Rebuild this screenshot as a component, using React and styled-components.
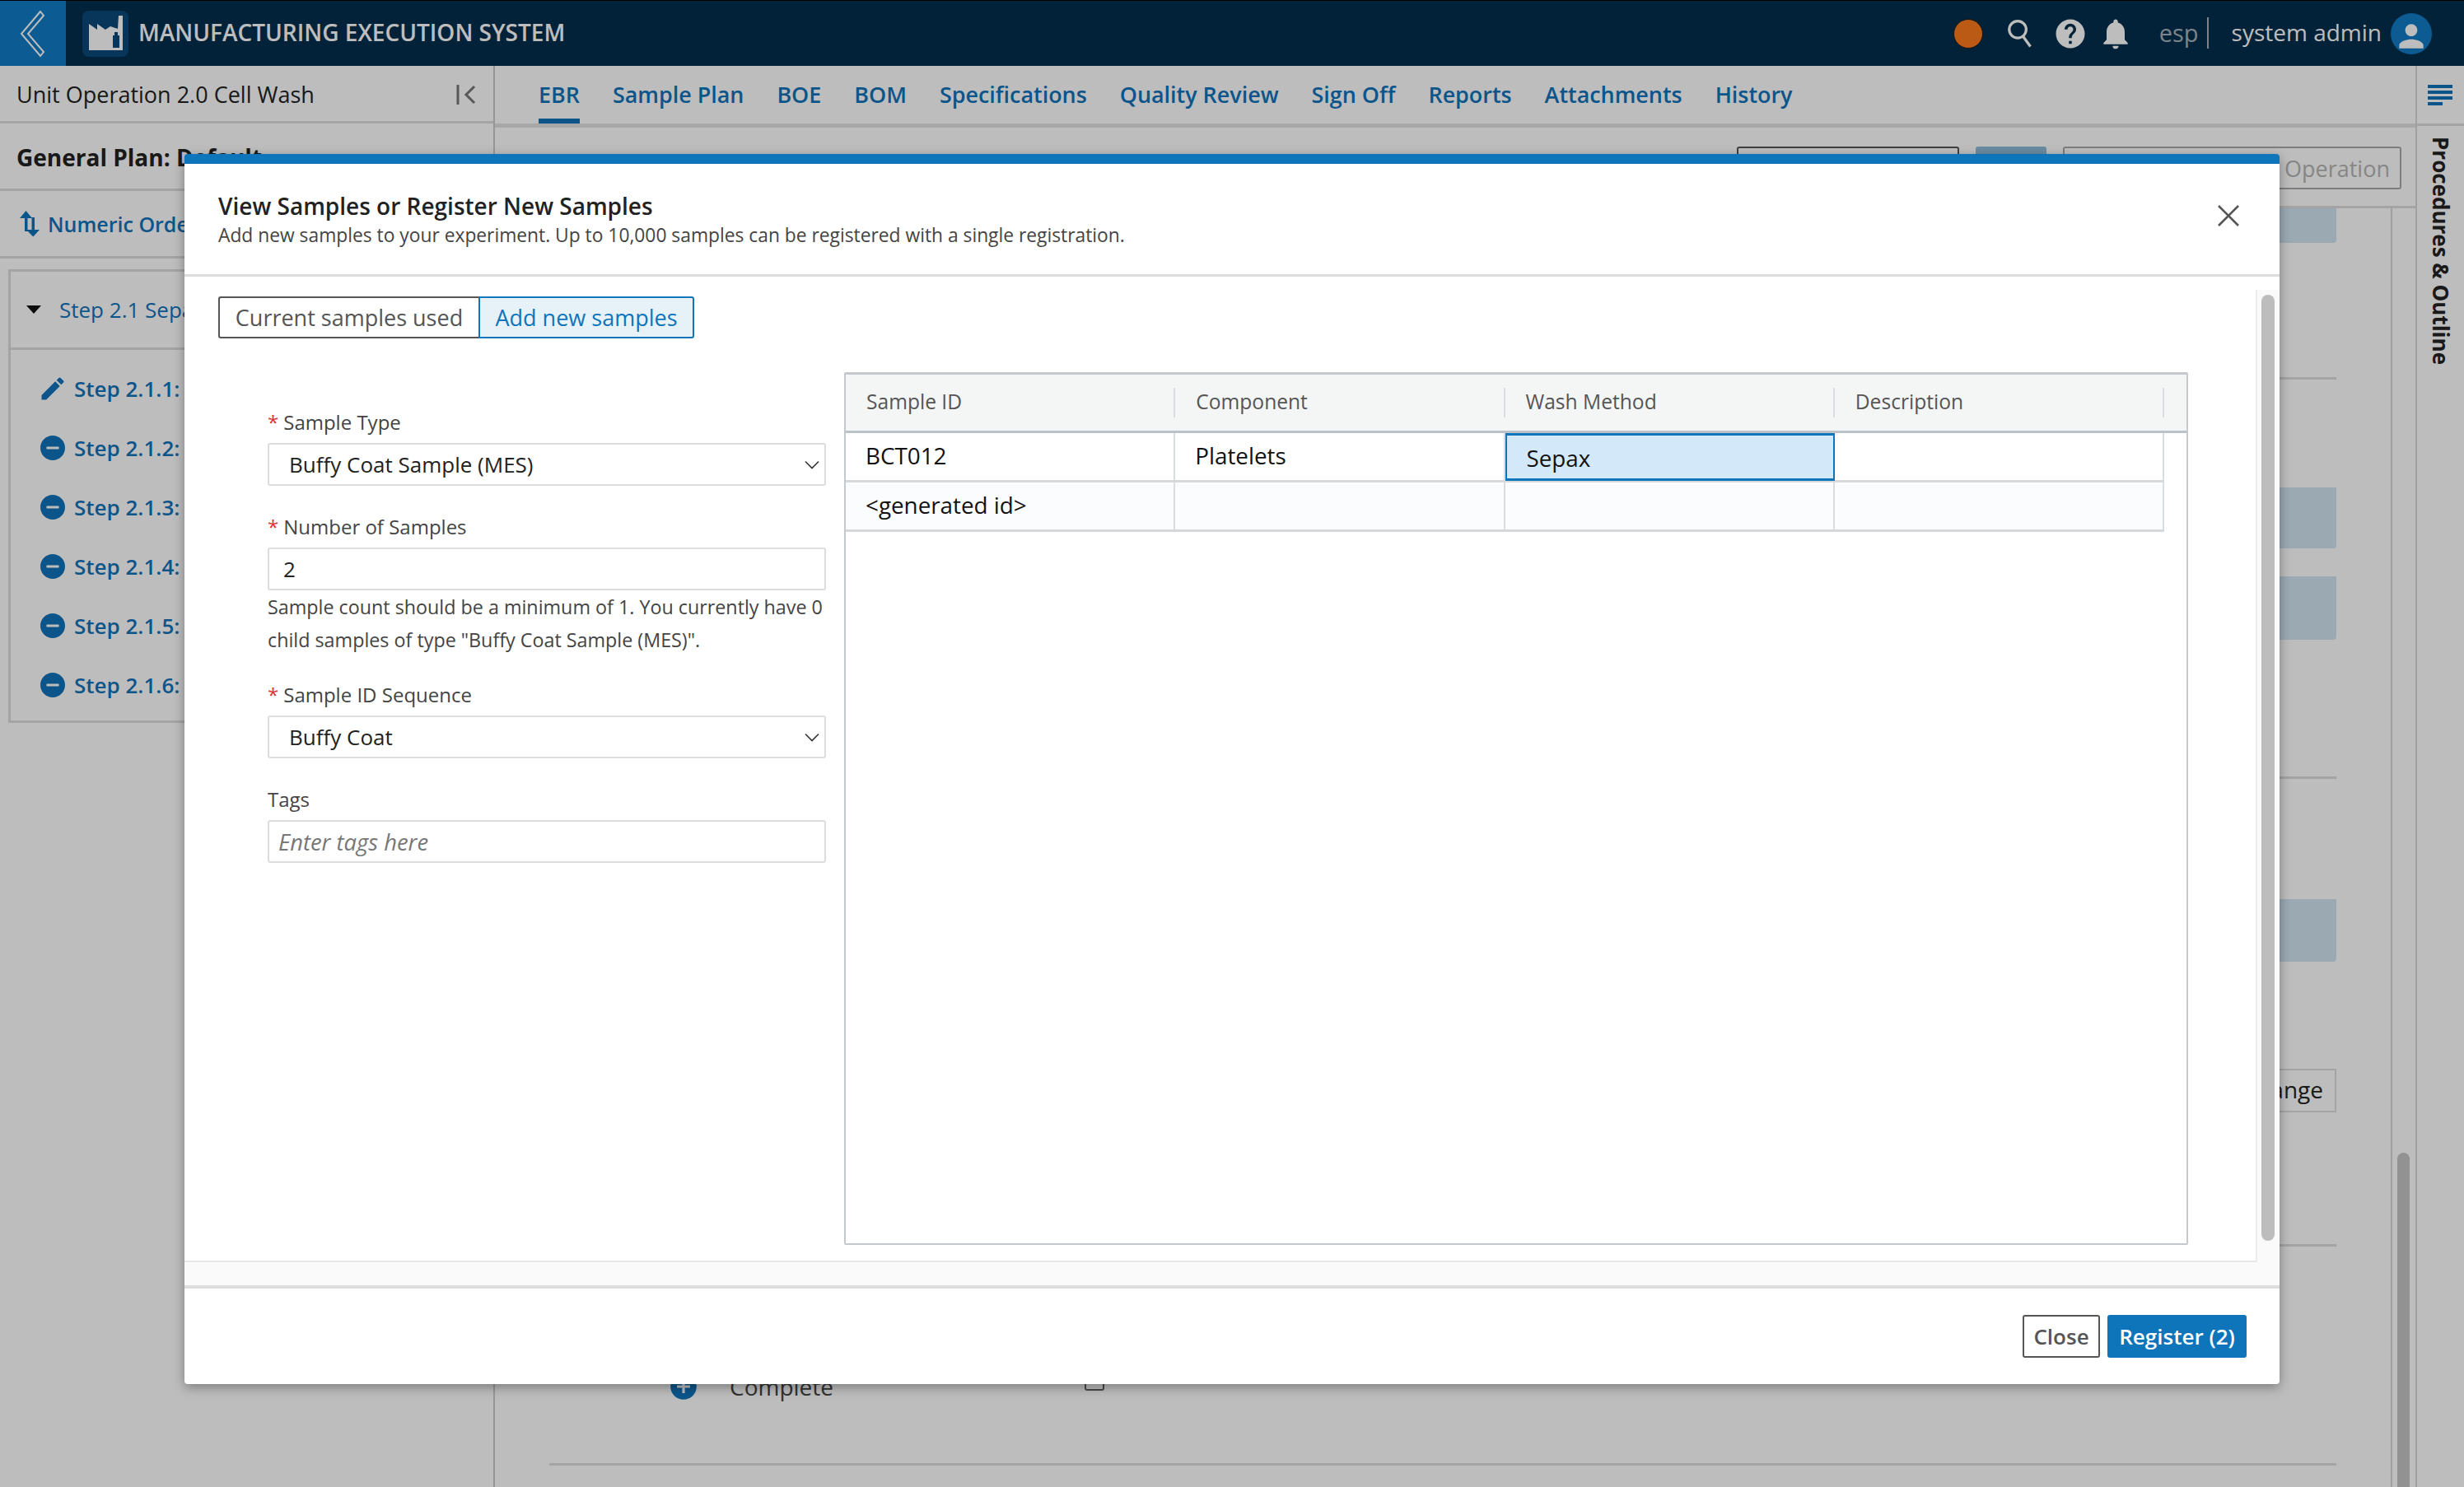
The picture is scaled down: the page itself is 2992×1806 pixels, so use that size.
import React from "react";
import styled, { createGlobalStyle } from "styled-components";
import { MdEdit, MdHelp, MdNotifications, MdPerson, MdRemoveCircle, MdAddCircle } from "react-icons/md";

const GlobalStyle = createGlobalStyle`
  html, body {
    margin: 0;
    padding: 0;
    background: #fff;
    font-family: "Open Sans", "Noto Sans", sans-serif;
    color: #222;
  }
  * { box-sizing: border-box; }
`;

const Page = styled.div`
  position: relative;
  width: 2992px;
  height: 1806px;
  overflow: hidden;
  display: flex;
  flex-direction: column;
  background: #fff;
`;

const TopBar = styled.header`
  height: 80px;
  flex: none;
  display: flex;
  align-items: center;
  border-top: 1px solid #000;
  background: #042e4d;
  color: #fff;
`;

const BackButton = styled.div`
  width: 80px;
  height: 79px;
  display: flex;
  align-items: center;
  justify-content: center;
  background: #117bc5;
`;

const Logo = styled.div`
  width: 56px;
  height: 56px;
  margin-left: 20px;
  display: flex;
  align-items: center;
  justify-content: center;
  border-radius: 8px;
  background: #0a4a7a;
`;

const AppTitle = styled.div`
  margin-left: 12px;
  margin-bottom: 3px;
  font-size: 28px;
  font-weight: 600;
`;

const TopActions = styled.div`
  margin-left: auto;
  padding-right: 39px;
  display: flex;
  align-items: center;
`;

const StatusDot = styled.div`
  width: 36px;
  height: 36px;
  border-radius: 50%;
  background: #fd7a1b;
  border: 1px solid #1a1a1a;
`;

const TopIcon = styled.div`
  display: flex;
  margin-left: ${(p) => p.$left}px;
  color: #fff;
`;

const Tenant = styled.span`
  margin-left: 31px;
  margin-bottom: 2px;
  font-size: 29px;
  color: #a9b4bd;
  padding-right: 10px;
  border-right: 2px solid #a9b4bd;
  line-height: 38px;
`;

const UserName = styled.span`
  margin-left: 28px;
  margin-bottom: 3px;
  font-size: 28px;
`;

const Avatar = styled.div`
  width: 50px;
  height: 50px;
  margin-left: 11px;
  border-radius: 50%;
  display: flex;
  align-items: flex-end;
  justify-content: center;
  overflow: hidden;
  background: #117bc5;
`;

const Workspace = styled.div`
  flex: 1;
  display: flex;
  min-height: 0;
`;

const LeftPanel = styled.aside`
  width: 601px;
  flex: none;
  border-right: 2px solid #ccc;
`;

const PanelHeader = styled.div`
  height: 70px;
  padding: 2px 20px 0 20px;
  display: flex;
  align-items: center;
  justify-content: space-between;
  font-size: 27px;
  border-bottom: 3px solid #ddd;
`;

const PlanRow = styled.div`
  height: 82px;
  padding: 2px 0 0 20px;
  display: flex;
  align-items: center;
  font-size: 28px;
  font-weight: 700;
  border-bottom: 3px solid #ddd;
`;

const OrderRow = styled.div`
  height: 82px;
  padding-left: 24px;
  display: flex;
  align-items: center;
  gap: 10px;
  font-size: 25px;
  font-weight: 600;
  color: #1173bb;
  border-bottom: 3px solid #ddd;
`;

const StepBox = styled.div`
  margin: 13px 0 0 10px;
  height: 551px;
  border: 3px solid #ddd;
`;

const StepHead = styled.div`
  height: 95px;
  padding-left: 19px;
  display: flex;
  align-items: center;
  gap: 22px;
  font-size: 26px;
  color: #1173bb;
  border-bottom: 3px solid #ddd;
`;

const Caret = styled.span`
  width: 0;
  height: 0;
  border-left: 9px solid transparent;
  border-right: 9px solid transparent;
  border-top: 10px solid #111;
`;

const StepList = styled.div`
  padding-top: 11px;
`;

const StepRow = styled.div`
  height: 72px;
  padding-left: 33px;
  display: flex;
  align-items: center;
  gap: 8px;
  font-size: 26px;
  font-weight: 600;
  color: #1173bb;
`;

const Main = styled.main`
  flex: 1;
  min-width: 0;
  display: flex;
  flex-direction: column;
`;

const Tabs = styled.nav`
  height: 75px;
  flex: none;
  padding-left: 53px;
  display: flex;
  gap: 40px;
  border-bottom: 5px solid #e2e2e2;
`;

const Tab = styled.div`
  height: 70px;
  padding-top: 16px;
  font-size: 26.9px;
  font-weight: 600;
  color: #1173bb;
  border-bottom: ${(p) => (p.$active ? "6px solid #1173bb" : "none")};
`;

const ActionRow = styled.div`
  height: 98px;
  flex: none;
  padding: 23px 17px 0 0;
  display: flex;
  justify-content: flex-end;
  gap: 20px;
  border-bottom: 3px solid #ddd;
`;

const OutlineAction = styled.div`
  width: ${(p) => p.$width}px;
  height: 52px;
  padding: 0 12px;
  display: flex;
  align-items: center;
  justify-content: flex-end;
  font-size: 27px;
  color: #b5b5b5;
  border: 2px solid ${(p) => (p.$dark ? "#555" : "#aaa")};
  border-radius: 3px;
`;

const FilledAction = styled.div`
  width: 86px;
  height: 52px;
  border-radius: 3px;
  background: #8fbcd9;
`;

const ContentArea = styled.div`
  flex: 1;
  min-height: 0;
  display: flex;
`;

const ContentColumn = styled.div`
  flex: 1;
  min-width: 0;
  padding: 0 66px;
`;

const Block = styled.div`
  height: ${(p) => p.$height}px;
  margin-top: ${(p) => p.$top}px;
  border-radius: 0 0 4px 4px;
  background: #d1e4f2;
`;

const Rule = styled.div`
  height: 3px;
  margin-top: ${(p) => p.$top}px;
  background: #ddd;
`;

const ChangeButton = styled.div`
  width: 300px;
  height: 53px;
  margin: 130px 0 0 auto;
  padding-right: 14px;
  text-align: right;
  line-height: 46px;
  font-size: 28px;
  border: 2px solid #ddd;
`;

const CompleteRow = styled.div`
  height: 40px;
  margin-top: 150px;
  padding-left: 144px;
  display: flex;
  align-items: center;
  font-size: 28px;
  color: #444;
`;

const CompleteLabel = styled.span`
  margin-left: 37px;
  width: 431px;
`;

const Check = styled.span`
  width: 24px;
  height: 24px;
  margin-bottom: 14px;
  border: 2px solid #666;
  border-radius: 3px;
`;

const ScrollRail = styled.div`
  width: 30px;
  flex: none;
  padding: 1147px 7px 0 6px;
  border-left: 2px solid #d8d8d8;
`;

const ScrollThumb = styled.div`
  height: 420px;
  border-radius: 8px;
  background: #c5c5c5;
`;

const RightRail = styled.aside`
  width: 59px;
  flex: none;
  border-left: 2px solid #d8d8d8;
`;

const RailTop = styled.div`
  height: 73px;
  padding: 23px 0 0 13px;
  display: flex;
  flex-direction: column;
  gap: 3px;
  border-bottom: 3px solid #ddd;
`;

const RailLine = styled.span`
  display: block;
  width: ${(p) => p.$width}px;
  height: 4px;
  background: #1173bb;
`;

const RailLabel = styled.div`
  margin: 13px 0 0 12px;
  writing-mode: vertical-rl;
  font-size: 26px;
  font-weight: 700;
  line-height: 34px;
`;

const Backdrop = styled.div`
  position: absolute;
  inset: 0;
  background: rgba(0, 0, 0, 0.26);
`;

const Modal = styled.section`
  position: absolute;
  top: 187px;
  left: 224px;
  width: 2544px;
  height: 1494px;
  display: flex;
  flex-direction: column;
  background: #fff;
  border-top: 12px solid #0e75ba;
  border-radius: 4px;
  box-shadow: 0 4px 14px rgba(0, 0, 0, 0.35);
`;

const ModalHeader = styled.div`
  height: 137px;
  flex: none;
  padding: 32px 41px 0;
  position: relative;
  border-bottom: 3px solid #ddd;
`;

const ModalTitle = styled.div`
  font-size: 28px;
  font-weight: 600;
  line-height: 38px;
  color: #222;
`;

const ModalSub = styled.div`
  font-size: 22.8px;
  line-height: 34px;
  color: #444;
`;

const CloseX = styled.svg`
  position: absolute;
  top: 50px;
  right: 49px;
`;

const ModalMiddle = styled.div`
  flex: 1;
  min-height: 0;
  display: flex;
  flex-direction: column;
  background: #fafafa;
`;

const ScrollFrame = styled.div`
  flex: 1;
  min-height: 0;
  display: flex;
  background: #fff;
`;

const FrameContent = styled.div`
  flex: 1;
  min-width: 0;
  padding: 24px 0 0 41px;
  border-bottom: 2px solid #e8e8e8;
`;

const FrameTrack = styled.div`
  width: 29px;
  flex: none;
  margin-top: 16px;
  padding: 6px 6px 0 5px;
  background: #fafafa;
  border-left: 2px solid #ececec;
`;

const FrameThumb = styled.div`
  width: 16px;
  height: 1149px;
  border-radius: 8px;
  background: #bdbdbd;
`;

const Band = styled.div`
  height: 28px;
  flex: none;
  margin-right: 29px;
`;

const Toggle = styled.div`
  display: flex;
  width: 578px;
  height: 51px;
`;

const ToggleItem = styled.div`
  flex: ${(p) => (p.$active ? "0 0 262px" : "0 0 316px")};
  display: flex;
  align-items: center;
  justify-content: center;
  font-size: 27px;
  font-weight: 500;
  color: ${(p) => (p.$active ? "#0e75ba" : "#555")};
  background: ${(p) => (p.$active ? "#e7f1f8" : "#fff")};
  border: 2px solid ${(p) => (p.$active ? "#0e75ba" : "#555")};
  border-radius: ${(p) => (p.$active ? "0 3px 3px 0" : "3px 0 0 3px")};
  ${(p) => (p.$active ? "" : "border-right: none;")}
`;

const SplitRow = styled.div`
  margin-top: 41px;
  display: flex;
`;

const FormColumn = styled.div`
  width: 678px;
  margin-left: 60px;
  padding-top: 46px;
  flex: none;
`;

const Field = styled.div`
  margin-bottom: ${(p) => p.$after ?? 35}px;
`;

const Label = styled.div`
  height: 30px;
  margin-bottom: 10px;
  font-size: 24px;
  line-height: 30px;
  color: #444;
`;

const Required = styled.span`
  margin-right: 6px;
  color: #d33;
`;

const Control = styled.div`
  height: 52px;
  padding: 0 6px 0 ${(p) => (p.$input ? 17 : 24)}px;
  display: flex;
  align-items: center;
  justify-content: space-between;
  font-size: 26px;
  color: #222;
  background: #fff;
  border: 2px solid #ddd;
  border-radius: 3px;
`;

const Placeholder = styled.span`
  margin-left: -6px;
  font-size: 27.4px;
  font-style: italic;
  color: #777;
`;

const Help = styled.div`
  font-size: 23.3px;
  line-height: 40px;
  color: #444;
`;

const Grid = styled.div`
  width: 1632px;
  height: 1060px;
  margin-left: 22px;
  flex: none;
  border: 2px solid #c4c9ce;
  border-top-width: 3px;
  border-radius: 2px;
`;

const GridHead = styled.div`
  height: 71px;
  padding-right: 27px;
  display: flex;
  align-items: center;
  background: #f4f6f6;
  border-bottom: 3px solid #bcc2c8;
`;

const HeadCell = styled.div`
  width: 400.5px;
  height: 36px;
  padding-left: 25px;
  font-size: 24.6px;
  line-height: 34px;
  color: #555;
  border-right: 2px solid #dadddf;
`;

const GridRow = styled.div`
  height: 60px;
  margin-right: 27px;
  display: flex;
  background: ${(p) => (p.$tint ? "#fbfcfd" : "#fff")};
  border-bottom: 3px solid #d5d9dc;
`;

const Cell = styled.div`
  width: 400.5px;
  padding-left: 24px;
  padding-bottom: 4px;
  display: flex;
  align-items: center;
  font-size: 27.8px;
  color: #111;
  border-right: 2px solid #dadddf;
  ${(p) =>
    p.$selected &&
    `
    padding-top: 1px;
    padding-bottom: 0;
    background: #d3e8f9;
    border: 2px solid #0e75ba;
    border-top-width: 3px;
    border-bottom-width: 3px;
    margin-bottom: -1px;
  `}
`;

const FooterBar = styled.div`
  height: 120px;
  flex: none;
  padding: 32px 40px 0 0;
  display: flex;
  justify-content: flex-end;
  gap: 9px;
  border-top: 4px solid #ddd;
`;

const FooterButton = styled.div`
  width: ${(p) => (p.$primary ? 169 : 94)}px;
  height: 52px;
  display: flex;
  align-items: center;
  justify-content: center;
  font-size: 26px;
  font-weight: 600;
  border-radius: 3px;
  color: ${(p) => (p.$primary ? "#fff" : "#555")};
  background: ${(p) => (p.$primary ? "#0e75ba" : "#fff")};
  border: 2px solid ${(p) => (p.$primary ? "#0e75ba" : "#555")};
`;

const SelectArrow = () => (
  <svg width="18" height="11" viewBox="0 0 18 11" fill="none" stroke="#333" strokeWidth="1.6">
    <path d="M1 1.5l8 8 8-8" />
  </svg>
);

const steps = ["Step 2.1.1:", "Step 2.1.2:", "Step 2.1.3:", "Step 2.1.4:", "Step 2.1.5:", "Step 2.1.6:"];
const tabs = [
  "EBR",
  "Sample Plan",
  "BOE",
  "BOM",
  "Specifications",
  "Quality Review",
  "Sign Off",
  "Reports",
  "Attachments",
  "History",
];

export default function App() {
  return (
    <Page>
      <GlobalStyle />
      <TopBar>
        <BackButton>
          <svg width="32" height="58" viewBox="0 0 32 58" fill="none" stroke="#fff" strokeWidth="2">
            <path d="M25 2L2 29l23 27 4-5L10 29 29 7z" />
          </svg>
        </BackButton>
        <Logo>
          <svg width="44" height="44" viewBox="0 0 44 44">
            <path fill="#fff" d="M2 10l10 7v-7l10 7 6-4 9 3 1-16h5v42H2z" />
            <path fill="#0a4a7a" d="M33 20h4v4h2v15h-8V24h2z" />
          </svg>
        </Logo>
        <AppTitle>MANUFACTURING EXECUTION SYSTEM</AppTitle>
        <TopActions>
          <StatusDot />
          <TopIcon $left={29}>
            <svg width="33" height="36" viewBox="0 0 38 42" fill="none" stroke="#fff" strokeWidth="3.8">
              <circle cx="15" cy="15" r="12" />
              <path d="M22 24l11 15" />
            </svg>
          </TopIcon>
          <TopIcon $left={23}>
            <MdHelp size={42} />
          </TopIcon>
          <TopIcon $left={12}>
            <MdNotifications size={44} />
          </TopIcon>
          <Tenant>esp</Tenant>
          <UserName>system admin</UserName>
          <Avatar>
            <MdPerson size={44} color="#fff" />
          </Avatar>
        </TopActions>
      </TopBar>
      <Workspace>
        <LeftPanel>
          <PanelHeader>
            Unit Operation 2.0 Cell Wash
            <svg width="26" height="24" viewBox="0 0 26 24" fill="none" stroke="#777" strokeWidth="3">
              <path d="M3 0v24M23 2L13 12l10 10" />
            </svg>
          </PanelHeader>
          <PlanRow>General Plan: Default</PlanRow>
          <OrderRow>
            <svg width="24" height="32" viewBox="0 0 24 32" fill="#1173bb">
              <path d="M0 9L7.5 0 15 9H9.5v16H6V9zM14.5 8H18v15h6l-7.75 8.5L8 23h6.5z" />
            </svg>
            Numeric Order
          </OrderRow>
          <StepBox>
            <StepHead>
              <Caret />
              Step 2.1 Separation
            </StepHead>
            <StepList>
              {steps.map((step, i) => (
                <StepRow key={step}>
                  {i === 0 ? <MdEdit size={36} /> : <MdRemoveCircle size={36} />}
                  {step}
                </StepRow>
              ))}
            </StepList>
          </StepBox>
        </LeftPanel>
        <Main>
          <Tabs>
            {tabs.map((tab, i) => (
              <Tab key={tab} $active={i === 0}>
                {tab}
              </Tab>
            ))}
          </Tabs>
          <ActionRow>
            <OutlineAction $width={270} $dark />
            <FilledAction />
            <OutlineAction $width={411}>Operation</OutlineAction>
          </ActionRow>
          <ContentArea>
            <ContentColumn>
              <Block $height={42} $top={0} />
              <Rule $top={163} />
              <Block $height={74} $top={131} />
              <Block $height={77} $top={34} />
              <Rule $top={166} />
              <Block $height={76} $top={146} />
              <ChangeButton>Change</ChangeButton>
              <Rule $top={160} />
              <CompleteRow>
                <MdAddCircle size={38} color="#1173bb" />
                <CompleteLabel>Complete</CompleteLabel>
                <Check />
              </CompleteRow>
              <Rule $top={73} />
            </ContentColumn>
            <ScrollRail>
              <ScrollThumb />
            </ScrollRail>
          </ContentArea>
        </Main>
        <RightRail>
          <RailTop>
            <RailLine $width={30} />
            <RailLine $width={30} />
            <RailLine $width={30} />
            <RailLine $width={18} />
          </RailTop>
          <RailLabel>Procedures &amp; Outline</RailLabel>
        </RightRail>
      </Workspace>

      <Backdrop />
      <Modal>
        <ModalHeader>
          <ModalTitle>View Samples or Register New Samples</ModalTitle>
          <ModalSub>
            Add new samples to your experiment. Up to 10,000 samples can be registered with a single registration.
          </ModalSub>
          <CloseX width="26" height="26" viewBox="0 0 26 26" fill="none" stroke="#555" strokeWidth="2.6">
            <path d="M1 1l24 24M25 1L1 25" />
          </CloseX>
        </ModalHeader>
        <ModalMiddle>
          <ScrollFrame>
            <FrameContent>
              <Toggle>
                <ToggleItem>Current samples used</ToggleItem>
                <ToggleItem $active>Add new samples</ToggleItem>
              </Toggle>
              <SplitRow>
                <FormColumn>
                  <Field>
                    <Label>
                      <Required>*</Required>Sample Type
                    </Label>
                    <Control>
                      Buffy Coat Sample (MES)
                      <SelectArrow />
                    </Control>
                  </Field>
                  <Field $after={32}>
                    <Label>
                      <Required>*</Required>Number of Samples
                    </Label>
                    <Control $input>2</Control>
                    <Help>
                      Sample count should be a minimum of 1. You currently have 0 child samples of type "Buffy Coat
                      Sample (MES)".
                    </Help>
                  </Field>
                  <Field>
                    <Label>
                      <Required>*</Required>Sample ID Sequence
                    </Label>
                    <Control>
                      Buffy Coat
                      <SelectArrow />
                    </Control>
                  </Field>
                  <Field>
                    <Label>Tags</Label>
                    <Control $input>
                      <Placeholder>Enter tags here</Placeholder>
                    </Control>
                  </Field>
                </FormColumn>
                <Grid>
                  <GridHead>
                    <HeadCell>Sample ID</HeadCell>
                    <HeadCell>Component</HeadCell>
                    <HeadCell>Wash Method</HeadCell>
                    <HeadCell>Description</HeadCell>
                  </GridHead>
                  <GridRow>
                    <Cell>BCT012</Cell>
                    <Cell>Platelets</Cell>
                    <Cell $selected>Sepax</Cell>
                    <Cell />
                  </GridRow>
                  <GridRow $tint>
                    <Cell>&lt;generated id&gt;</Cell>
                    <Cell />
                    <Cell />
                    <Cell />
                  </GridRow>
                </Grid>
              </SplitRow>
            </FrameContent>
            <FrameTrack>
              <FrameThumb />
            </FrameTrack>
          </ScrollFrame>
          <Band />
        </ModalMiddle>
        <FooterBar>
          <FooterButton>Close</FooterButton>
          <FooterButton $primary>Register (2)</FooterButton>
        </FooterBar>
      </Modal>
    </Page>
  );
}
